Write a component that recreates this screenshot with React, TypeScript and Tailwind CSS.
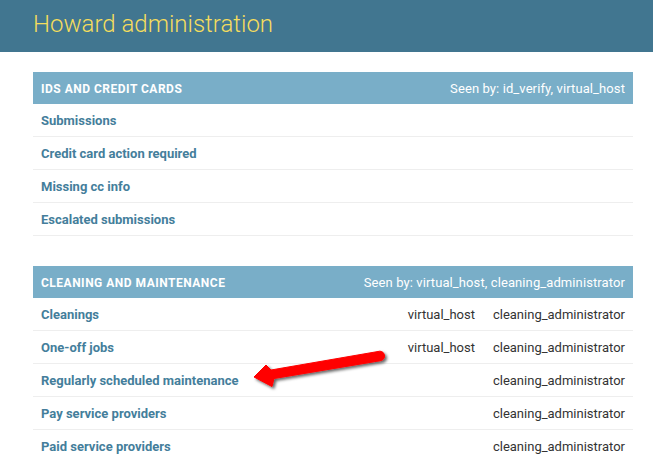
import React from 'react'

type Row = { name: string; host?: boolean; admin?: boolean }

const ids: Row[] = [
  { name: 'Submissions' },
  { name: 'Credit card action required' },
  { name: 'Missing cc info' },
  { name: 'Escalated submissions' },
]

const cleaning: Row[] = [
  { name: 'Cleanings', host: true, admin: true },
  { name: 'One-off jobs', host: true, admin: true },
  { name: 'Regularly scheduled maintenance', admin: true },
  { name: 'Pay service providers', admin: true },
  { name: 'Paid service providers', admin: true },
]

function Module({ title, seenBy, rows }: { title: string; seenBy: string; rows: Row[] }) {
  const perms = rows.some(x => x.host || x.admin)
  return (
    <div className="mb-[30px] w-[600px]">
      <div className="flex h-[32px] items-center justify-between bg-[#79aec8] px-2 pt-px text-white">
        <span className="text-[12px] font-bold uppercase tracking-[0.5px]">{title}</span>
        <span className="text-[13px] tracking-[0.1px]">Seen by: {seenBy}</span>
      </div>
      {rows.map(r => (
        <div key={r.name} className="flex h-[33px] items-center border-b border-[#eee] pt-px text-[13px]">
          <a className="flex-1 px-2 font-bold text-[#447e9b]">{r.name}</a>
          {perms && (
            <>
              <span className="w-[86px] px-2 text-right text-[#333]">{r.host ? 'virtual_host' : ''}</span>
              <span className="w-[150px] px-2 text-right text-[#333]">{r.admin ? 'cleaning_administrator' : ''}</span>
            </>
          )}
        </div>
      ))}
    </div>
  )
}

export default function App() {
  return (
    <div className="relative h-[460px] w-[653px] overflow-hidden bg-white" style={{ fontFamily: 'Roboto, "Liberation Sans", sans-serif' }}>
      <div className="flex h-[52px] items-center bg-[#417690] pb-[4px] pl-[33px]">
        <h1 className="text-[24px] font-light text-[#f5dd5d]">Howard administration</h1>
      </div>
      <div className="pl-[33px] pt-[20px]">
        <Module title="IDs and credit cards" seenBy="id_verify, virtual_host" rows={ids} />
        <Module title="Cleaning and maintenance" seenBy="virtual_host, cleaning_administrator" rows={cleaning} />
      </div>

      {/* annotation arrow */}
      <svg className="pointer-events-none absolute left-0 top-0" width="653" height="460">
        <defs>
          <filter id="sh" x="-20%" y="-50%" width="140%" height="200%">
            <feDropShadow dx="2" dy="2" stdDeviation="1.5" floodColor="#000" floodOpacity="0.6" />
          </filter>
        </defs>
        <path
          d="M254 377 L266 365 L271 370 L378 351.5 A4.5 4.5 0 0 1 381.5 360.5 L274 378.5 L272 386.5 Z"
          fill="#ff0000"
          stroke="#ff0000"
          strokeWidth="1"
          strokeLinejoin="round"
          filter="url(#sh)"
        />
      </svg>
    </div>
  )
}
